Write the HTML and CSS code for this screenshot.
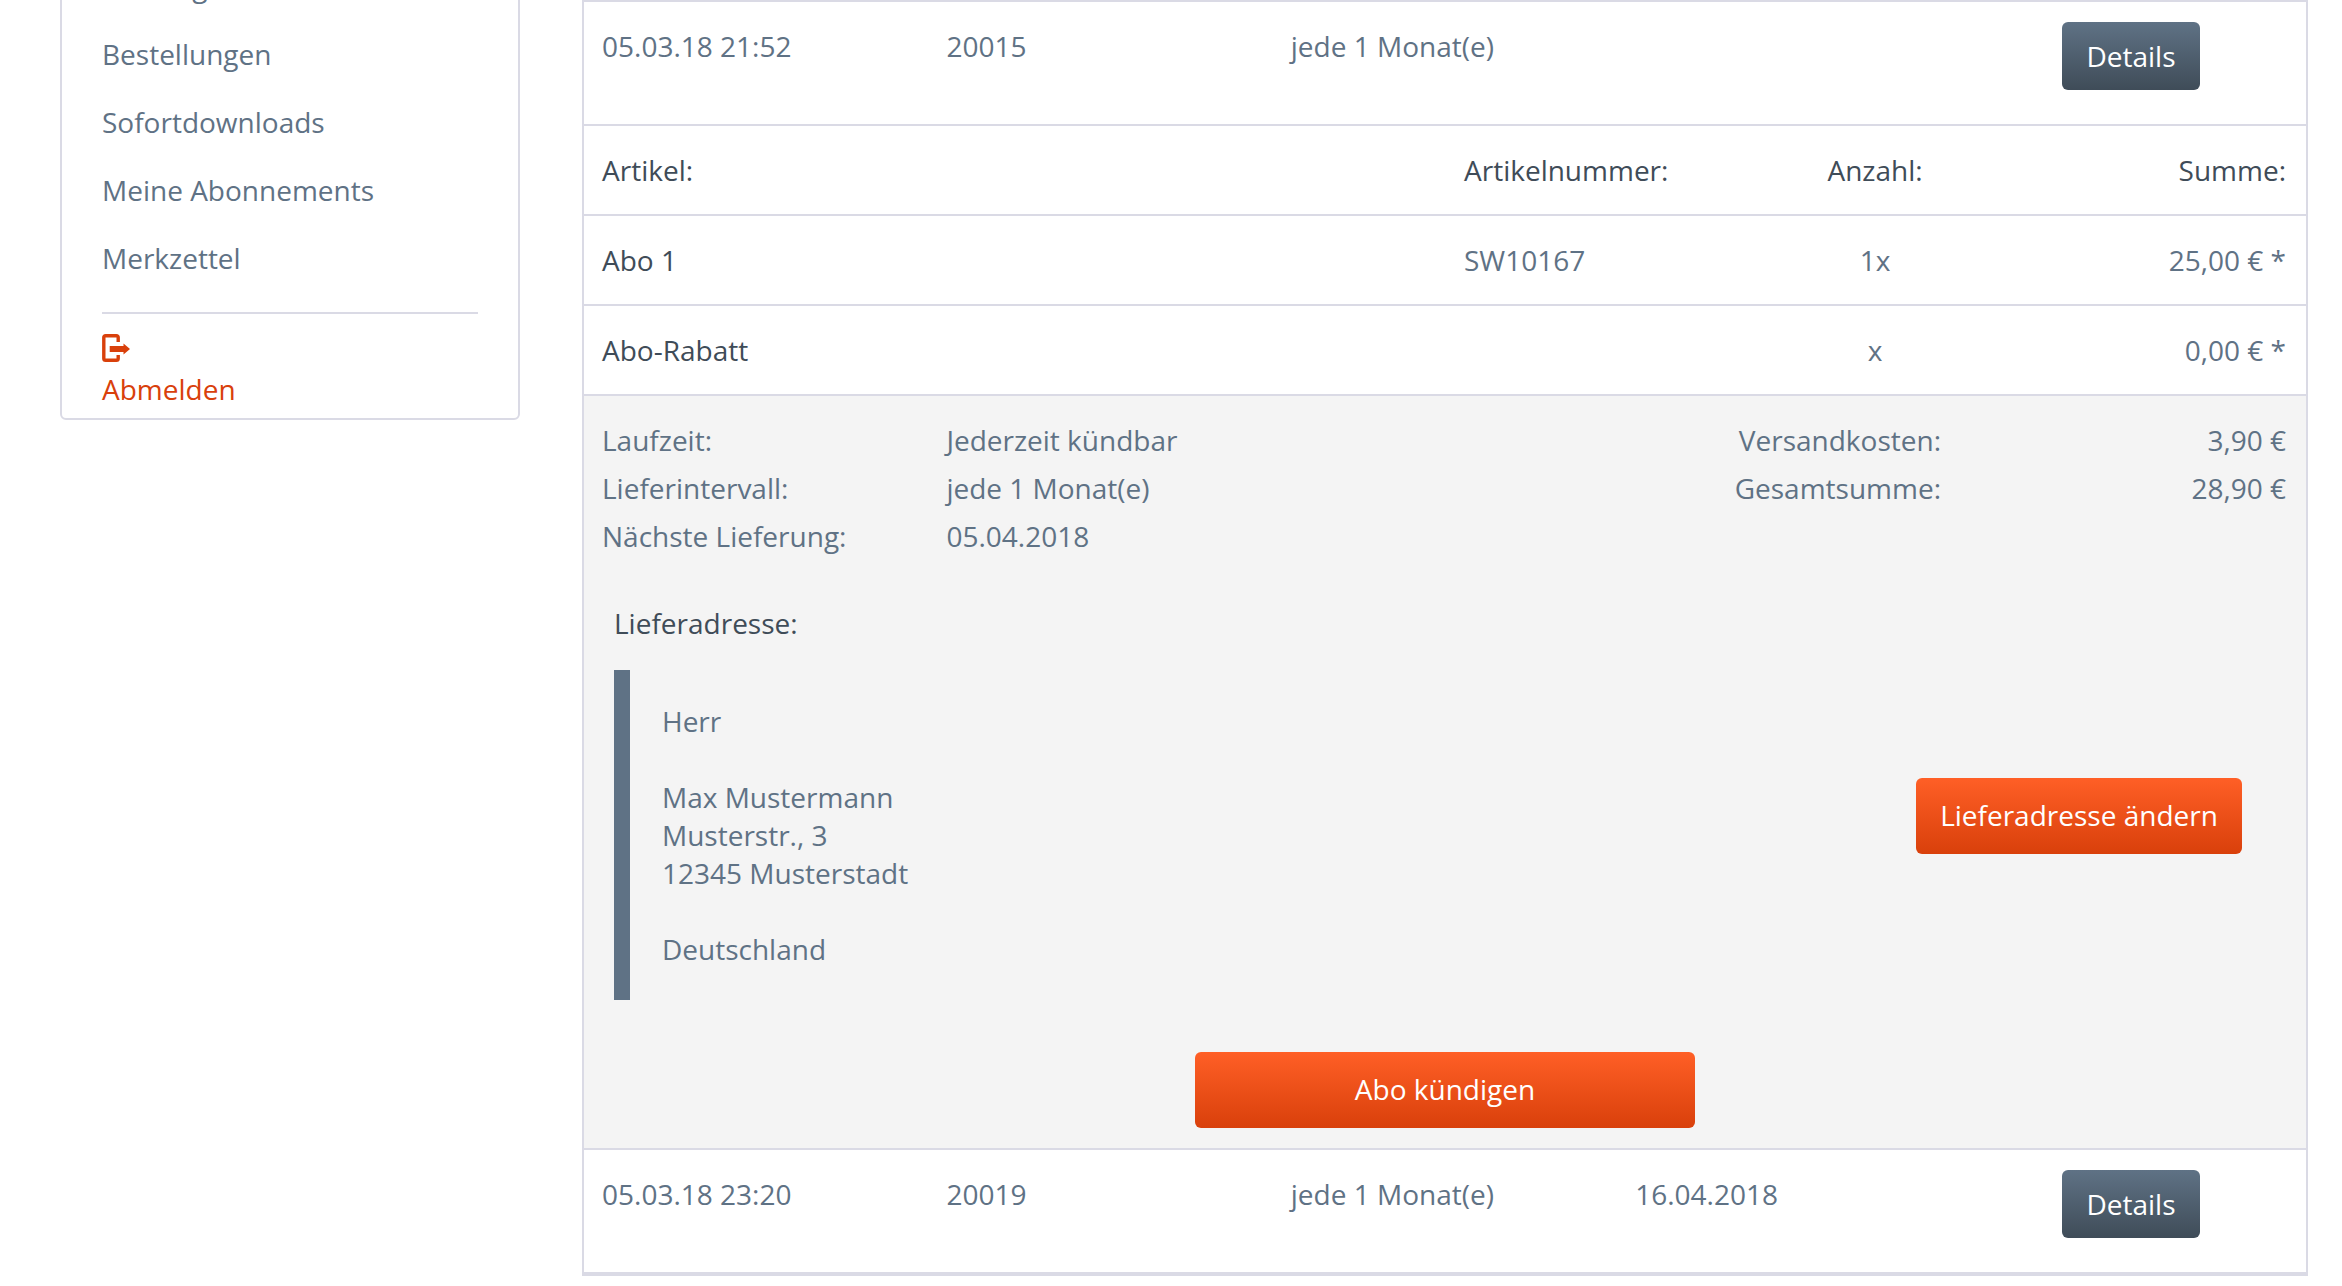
FILE: index.html
```html
<!DOCTYPE html>
<html lang="de">
<head>
<meta charset="utf-8">
<title>Meine Abonnements</title>
<link rel="stylesheet" href="styles.css">
</head>
<body>
<div class="page">
  <aside class="sidebar">
    <nav class="nav">
      <a class="nav-link">Zahlungsarten</a>
      <a class="nav-link">Bestellungen</a>
      <a class="nav-link">Sofortdownloads</a>
      <a class="nav-link">Meine Abonnements</a>
      <a class="nav-link">Merkzettel</a>
    </nav>
    <div class="logout">
      <svg class="logout-icon" width="28" height="28" viewBox="0 0 28 28" aria-hidden="true">
        <path d="M16.2 8V3.6Q16.2 1.8 14.4 1.8H3.6Q1.8 1.8 1.8 3.6V24.4Q1.8 26.2 3.6 26.2H14.4Q16.2 26.2 16.2 24.4V21" fill="none" stroke="#d9400b" stroke-width="3.4"/>
        <path d="M7.7 12H21.5V9.6L28 15L21.5 20.4V18H7.7Z" fill="#d9400b"/>
      </svg>
      <a class="logout-link">Abmelden</a>
    </div>
  </aside>
  <main class="subscriptions">
    <div class="sub-row">
      <span>05.03.18 21:52</span><span>20015</span><span>jede 1 Monat(e)</span><span></span>
      <a class="btn btn-dark">Details</a>
    </div>
    <div class="detail">
      <div class="item-row item-head">
        <span>Artikel:</span><span>Artikelnummer:</span><span class="center">Anzahl:</span><span class="right">Summe:</span>
      </div>
      <div class="item-row">
        <span class="strong">Abo 1</span><span>SW10167</span><span class="center">1x</span><span class="right">25,00 € *</span>
      </div>
      <div class="item-row">
        <span class="strong">Abo-Rabatt</span><span></span><span class="center">x</span><span class="right">0,00 € *</span>
      </div>
      <div class="info">
        <div class="summary">
          <span>Laufzeit:</span><span>Jederzeit kündbar</span><span class="right">Versandkosten:</span><span class="right">3,90 €</span>
          <span>Lieferintervall:</span><span>jede 1 Monat(e)</span><span class="right">Gesamtsumme:</span><span class="right">28,90 €</span>
          <span>Nächste Lieferung:</span><span>05.04.2018</span>
        </div>
        <h3 class="address-title">Lieferadresse:</h3>
        <div class="address-row">
          <address class="address">Herr<br><br>Max Mustermann<br>Musterstr., 3<br>12345 Musterstadt<br><br>Deutschland</address>
          <a class="btn btn-primary btn-change">Lieferadresse ändern</a>
        </div>
        <div class="cancel-row">
          <a class="btn btn-primary btn-cancel">Abo kündigen</a>
        </div>
      </div>
    </div>
    <div class="sub-row sub-row-last">
      <span>05.03.18 23:20</span><span>20019</span><span>jede 1 Monat(e)</span><span>16.04.2018</span>
      <a class="btn btn-dark">Details</a>
    </div>
  </main>
</div>
</body>
</html>
```
FILE: styles.css
```css
* { box-sizing: border-box; }
html, body { margin: 0; height: 100%; overflow: hidden; background: #fff; }
body {
  font-family: "Open Sans", "Noto Sans", sans-serif;
  font-size: 28px;
  line-height: 38px;
  color: #5f7285;
}
.page { display: flex; align-items: flex-start; padding-left: 60px; }

.sidebar {
  width: 460px;
  margin-top: -50px;
  border: 2px solid #dadae5;
  border-radius: 6px;
  padding: 0 40px 10px;
}
.nav { padding-bottom: 20px; border-bottom: 2px solid #dadae5; }
.nav-link { display: block; padding: 15px 0; }
.logout { padding-top: 20px; color: #d9400b; }
.logout-icon { display: block; margin-bottom: 8px; }
.logout-link { display: block; }

.subscriptions {
  width: 1726px;
  margin-left: 62px;
  border-left: 2px solid #dadae5;
  border-right: 2px solid #dadae5;
  border-top: 2px solid #dadae5;
  border-bottom: 4px solid #dadae5;
}
.sub-row {
  display: grid;
  grid-template-columns: repeat(4, 344.4px) 1fr;
  padding: 20px 0 34px 18px;
  height: 122px;
}
.sub-row > span { padding-top: 5px; }
.sub-row .btn { justify-self: end; margin-right: 106px; }
.sub-row-last { border-top: 0; }

.item-row {
  display: grid;
  grid-template-columns: 862px 311px 200px 1fr;
  align-items: center;
  height: 90px;
  padding: 0 20px 0 18px;
  border-top: 2px solid #dadae5;
}
.item-head, .strong { color: #3f4c58; }
.center { text-align: center; }
.right { text-align: right; }

.info {
  background: #f4f4f4;
  border-top: 2px solid #dadae5;
  border-bottom: 2px solid #dadae5;
  padding: 20px 0;
}
.summary {
  display: grid;
  grid-template-columns: 344.4px 300px 1fr 345px;
  padding: 0 20px 0 18px;
  line-height: 48px;
}
.address-title {
  margin: 44px 0 28px 30px;
  font-size: 28px;
  font-weight: 400;
  line-height: 38px;
  color: #3f4c58;
}
.address-row { display: flex; align-items: flex-start; padding: 0 64px 0 30px; }
.address {
  font-style: normal;
  border-left: 16px solid #5f7285;
  padding: 32px 0 32px 32px;
}
.cancel-row { display: flex; justify-content: center; margin-top: 52px; }

.btn {
  display: block;
  border-radius: 6px;
  color: #fff;
  text-align: center;
  white-space: nowrap;
}
.btn-dark {
  width: 138px;
  height: 68px;
  line-height: 68px;
  background: linear-gradient(to bottom, #5f7285, #3f4c58);
}
.btn-primary {
  height: 76px;
  line-height: 74px;
  background: linear-gradient(to bottom, #ff5f26, #d9400b);
}
.btn-change { width: 326px; margin: 108px 0 0 auto; }
.btn-cancel { width: 500px; }
```
